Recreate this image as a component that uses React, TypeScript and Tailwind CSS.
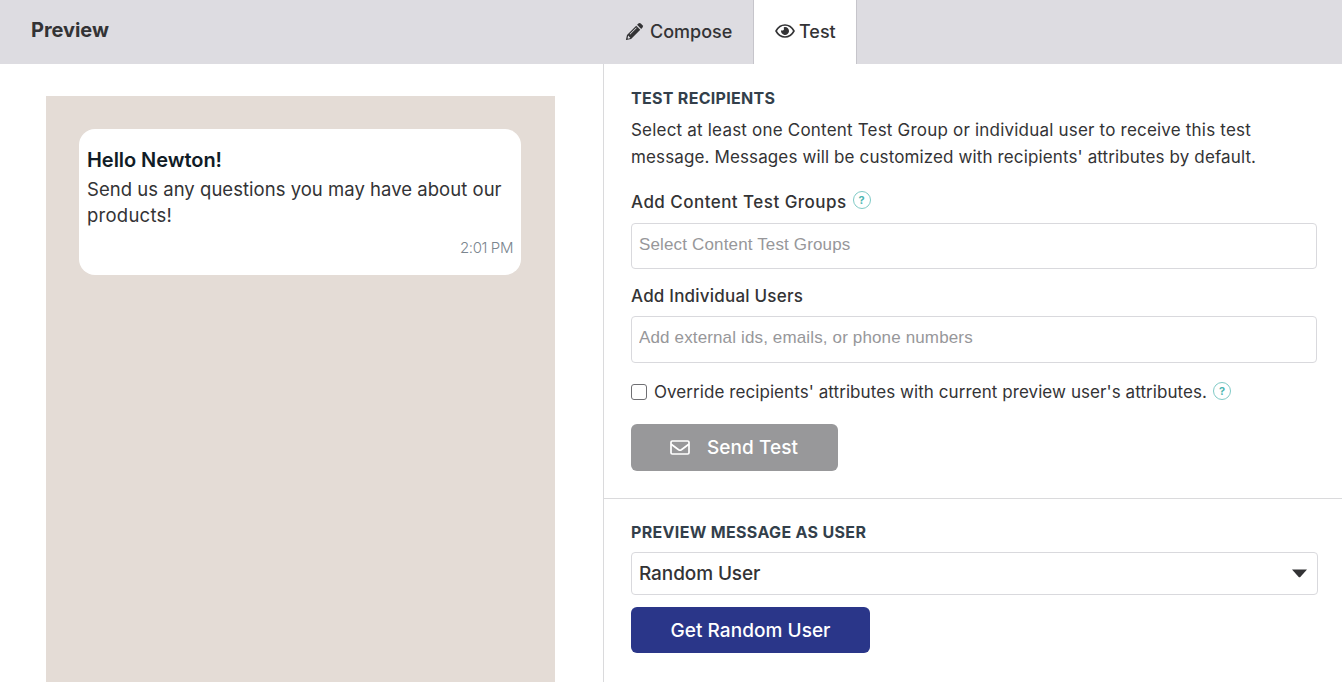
import type { ReactNode } from "react";

function PencilIcon() {
  return (
    <svg width="19" height="19" viewBox="0 0 19 19" className="shrink-0">
      <path
        fill="#333335"
        fillRule="evenodd"
        d="M11.2 3.7 15.3 7.8 6.1 17 1.2 18.1 0.9 17.8 2 12.9ZM3.2 13.6 2.6 16.2 3.1 16.7 5.4 16.1ZM11.1 5.5 4.6 12 5.2 12.6 11.7 6.1Z"
      />
      <path fill="#333335" d="M12.1 2.8 13.4 1.5Q14.6.4 15.8 1.5L17.5 3.2Q18.6 4.4 17.5 5.6L16.2 6.9Z" />
    </svg>
  );
}

function EyeIcon() {
  return (
    <svg width="20" height="14" viewBox="0 0 20 14" className="shrink-0">
      <path d="M1 7C3.1 3.1 6.2 1 10 1s6.900 2.100 9 6c-2.100 3.900-5.200 6-9 6S3.100 10.900 1 7Z" fill="none" stroke="#333335" strokeWidth="1.6" strokeLinejoin="round" />
      <path fill="#333335" d="M10 3A4 4 0 1 1 6.100 6.200C6.700 6.700 8.600 6.800 8.900 5.500 9.100 4.700 8.700 4 8.800 3.200A4 4 0 0 1 10 3Z" />
    </svg>
  );
}

function MailIcon() {
  return (
    <svg width="20" height="15" viewBox="0 0 20 15" fill="none" stroke="#fff" strokeWidth="1.7" strokeLinejoin="round" className="shrink-0">
      <rect x="1" y="1" width="18" height="13" rx="1.300" />
      <path d="M1.200 4.200 8.600 9.700Q10 10.600 11.400 9.700L18.800 4.200" />
    </svg>
  );
}

function Help() {
  return (
    <span className="flex size-[18px] shrink-0 items-center justify-center rounded-full border border-[#7fcac6] text-[11px] leading-none font-bold text-[#4db6b1]">
      ?
    </span>
  );
}

function Heading({ children, className }: { children: ReactNode; className: string }) {
  return <h2 className={`text-[16px] leading-6 font-bold whitespace-nowrap text-[#333f4b] ${className}`}>{children}</h2>;
}

export default function App() {
  return (
    <div className="flex h-[682px] w-[1342px] flex-col overflow-hidden bg-white font-[Inter,sans-serif] text-[#333335]">
      <header className="flex h-16 shrink-0 bg-[#dddce1]">
        <h1 className="w-[604px] pt-[15px] pl-[31px] text-[20px] leading-[30px] font-bold tracking-[-0.05px]">Preview</h1>
        <nav className="flex">
          <button className="flex w-[149px] items-center pb-[2px] pl-[21px] text-[18px] font-medium">
            <PencilIcon />
            <span className="ml-[6px]">Compose</span>
          </button>
          <button className="flex w-[104px] items-center border-x border-[#c6c5cb] bg-white pb-[2px] pl-[21px] text-[18px] font-medium">
            <EyeIcon />
            <span className="ml-[4px]">Test</span>
          </button>
        </nav>
      </header>

      <div className="flex min-h-0 flex-1">
        <section className="w-[603px] shrink-0 pt-8 pl-[46px]">
          <div className="h-full w-[509px] bg-[#e4dcd6] px-[33px] pt-[33px]">
            <div className="h-[146px] w-[442px] rounded-[16px] bg-white px-2 pt-[16px]">
              <p className="text-[20px] leading-[30px] font-semibold tracking-[-0.05px] text-[#111c26]">Hello Newton!</p>
              <p className="mt-[1px] text-[18.5px] leading-[26px] whitespace-nowrap">
                <span className="tracking-[0.03px]">Send us any questions you may have about our</span>
                <br />
                <span className="tracking-[0.25px]">products!</span>
              </p>
              <p className="mt-[9px] text-right text-[15px] leading-[22px] font-light tracking-[-0.4px] text-[#7b868f]">2:01 PM</p>
            </div>
          </div>
        </section>

        <main className="flex-1 border-l border-[#dadadc]">
          <section className="h-[435px] border-b border-[#dadadc] pt-[22px] pl-[27px]">
            <Heading className="tracking-[0.3px]">TEST RECIPIENTS</Heading>
            <p className="mt-[7px] text-[17px] leading-[27px] whitespace-nowrap">
              <span className="tracking-[0.2px]">Select at least one Content Test Group or individual user to receive this test</span>
              <br />
              <span className="tracking-[0.125px]">message. Messages will be customized with recipients' attributes by default.</span>
            </p>
            <div className="mt-[18px] flex h-[26px] gap-[6px]">
              <label className="text-[17px] leading-[26px] font-medium tracking-[0.46px]">Add Content Test Groups</label>
              <span className="pt-[2px]"><Help /></span>
            </div>
            <input
              placeholder="Select Content Test Groups"
              className="mt-[8px] block h-[46px] w-[686px] rounded-[4px] border border-[#d9d9dd] px-[7px] pb-[3px] font-['Liberation_Sans',sans-serif] text-[17px] tracking-[0.15px] placeholder:text-[#97979a]"
            />
            <label className="mt-[14px] block text-[17px] leading-[26px] font-medium tracking-[0.21px]">Add Individual Users</label>
            <input
              placeholder="Add external ids, emails, or phone numbers"
              className="mt-[7px] block h-[47px] w-[686px] rounded-[4px] border border-[#d9d9dd] px-[7px] pb-[4px] font-['Liberation_Sans',sans-serif] text-[17px] tracking-[0.14px] placeholder:text-[#97979a]"
            />
            <div className="mt-[16px] flex h-[26px] items-center">
              <input type="checkbox" className="size-4 appearance-none rounded-[3px] border border-[#6f6f73] bg-white" />
              <span className="ml-[7px] text-[17px] leading-[26px] tracking-[0.07px]">Override recipients' attributes with current preview user's attributes.</span>
              <span className="ml-[6px] self-start pt-[3px]"><Help /></span>
            </div>
            <button className="mt-[19px] flex h-[47px] w-[207px] items-center rounded-[6px] bg-[#98989a] pl-[39px] text-[19px] font-medium text-white">
              <MailIcon />
              <span className="ml-[17px] pt-[1px] tracking-[0.06px]">Send Test</span>
            </button>
          </section>

          <section className="pt-[21px] pl-[27px]">
            <Heading className="tracking-[0.33px]">PREVIEW MESSAGE AS USER</Heading>
            <button className="mt-[8px] flex h-[43px] w-[687px] items-center justify-between rounded-[4px] border border-[#d9d9dd] pr-[10px] pl-[7px] text-[19px] font-medium tracking-[-0.1px]">
              <span className="pt-[2px]">Random User</span>
              <svg width="15" height="9" viewBox="0 0 15 9"><path fill="#333335" d="M0 .5H15L8.300 8Q7.500 8.700 6.700 8Z" /></svg>
            </button>
            <button className="mt-3 block h-[46px] w-[239px] rounded-[6px] bg-[#2a3689] pt-[2px] text-[19px] font-medium tracking-[0.05px] text-white">
              Get Random User
            </button>
          </section>
        </main>
      </div>
    </div>
  );
}
